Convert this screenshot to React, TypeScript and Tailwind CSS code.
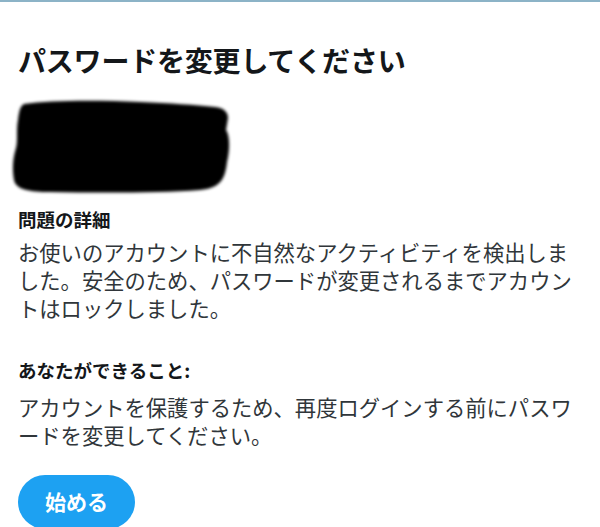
const jp = { fontFamily: '"Noto Sans CJK JP", "Noto Sans", sans-serif' };

function Redaction() {
  return (
    <svg width="224" height="96" viewBox="0 0 224 96" className="block -ml-[8px] blur-[1.5px]">
      <path
        d="M14 4 C40 0 90 0 130 2 C160 3 185 5 205 7 C214 8 218 12 218 18 L216 30 C220 36 220 50 217 62 C215 80 210 88 190 90 C150 93 90 93 40 92 C20 92 6 90 4 80 C2 68 3 58 6 48 C8 40 6 30 8 20 C9 12 10 6 14 4 Z"
        fill="#000"
      />
    </svg>
  );
}

export default function App() {
  return (
    <div className="w-[600px] h-[527px] overflow-hidden bg-white" style={jp}>
      <div className="h-[2px] bg-[#8cb3c7]" />
      <div className="pl-[18px] pr-[18px]">
        <h1 className="mt-[38px] text-[28px] leading-[40px] font-bold text-[#14171a] tracking-[-0.2px]">
          パスワードを変更してください
        </h1>
        <div className="mt-[20px]">
          <Redaction />
        </div>
        <h2 className="mt-[10px] text-[18.5px] leading-[26px] font-bold text-[#14171a]">問題の詳細</h2>
        <p className="mt-[6px] text-[21.3px] leading-[28px] text-[#30363a]">
          お使いのアカウントに不自然なアクティビティを検出しました。安全のため、パスワードが変更されるまでアカウントはロックしました。
        </p>
        <h2 className="mt-[35px] text-[18.5px] leading-[26px] font-bold text-[#14171a]">あなたができること:</h2>
        <p className="mt-[10px] text-[21.3px] leading-[28px] text-[#30363a]">
          アカウントを保護するため、再度ログインする前にパスワードを変更してください。
        </p>
        <button className="mt-[26px] h-[54px] px-[27px] rounded-full bg-[#1da1f2] text-white text-[21px] font-bold">
          始める
        </button>
      </div>
    </div>
  );
}
